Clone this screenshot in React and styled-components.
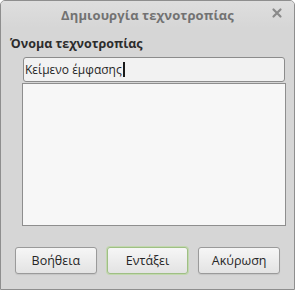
import React from "react";
import styled, { createGlobalStyle } from "styled-components";

const Global = createGlobalStyle`
  html, body { margin: 0; padding: 0; background: #ffffff; }
  body { font-family: "Open Sans", "Noto Sans", "DejaVu Sans", sans-serif; }
  * { box-sizing: border-box; }
`;

const Window = styled.div`
  width: 295px;
  height: 290px;
  background: #d6d6d6;
  border: 1px solid #8e8e8e;
  border-radius: 5px 5px 0 0;
  display: flex;
  flex-direction: column;
  overflow: hidden;
`;

const TitleBar = styled.div`
  height: 27px;
  position: relative;
  display: flex;
  align-items: center;
  justify-content: center;
  background: linear-gradient(#dedede, #d6d6d6);
`;

const Title = styled.div`
  font-size: 13px;
  font-weight: 700;
  color: #727272;
  letter-spacing: 0.1px;
`;

const Close = styled.div`
  position: absolute;
  right: 11px;
  top: 6px;
  width: 12px;
  height: 12px;
  display: flex;
`;

const Body = styled.div`
  flex: 1;
  display: flex;
  flex-direction: column;
  padding: 7px 9px 15px 9px;
`;

const Label = styled.div`
  font-size: 12.5px;
  font-weight: 700;
  color: #2c2c2c;
  line-height: 17px;
  margin-bottom: 5px;
`;

const Fields = styled.div`
  display: flex;
  flex-direction: column;
  padding: 0 0 0 12px;
  margin-right: -1px;
`;

const Input = styled.div`
  height: 25px;
  margin: 0 1px 1px 1px;
  background: #f2f2f2;
  border: 1px solid #8c8c8c;
  border-radius: 3px;
  display: flex;
  align-items: center;
  padding-left: 1px;
  font-size: 12px;
  color: #262626;
`;

const Caret = styled.span`
  display: inline-block;
  width: 2px;
  height: 15px;
  background: #1a1a1a;
  margin-left: 1px;
`;

const TextArea = styled.div`
  height: 143px;
  background: #f7f7f7;
  border: 1px solid #8e8e8e;
`;

const Buttons = styled.div`
  margin-top: auto;
  display: flex;
  justify-content: flex-end;
  gap: 10px;
  padding-right: 5px;
  padding-left: 5px;
`;

const Button = styled.div`
  width: 82px;
  height: 27px;
  display: flex;
  align-items: center;
  justify-content: center;
  font-size: 12.5px;
  color: #262626;
  border-radius: 3px;
  border: 1px solid ${(p) => (p.$default ? "#9fbf85" : "#9a9a9a")};
  box-shadow: ${(p) =>
    p.$default ? "0 0 0 1px #c2d8ae" : "0 1px 1px rgba(0,0,0,0.08)"};
  background: linear-gradient(#f6f6f6, #e3e3e3);
`;

export default function App() {
  return (
    <>
      <Global />
      <Window>
        <TitleBar>
          <Title>Δημιουργία τεχνοτροπίας</Title>
          <Close>
            <svg width="12" height="12" viewBox="0 0 12 12">
              <path d="M2.5 2.5 L9.5 9.5 M9.5 2.5 L2.5 9.5" stroke="#8a8a8a" strokeWidth="2.2" strokeLinecap="round" />
            </svg>
          </Close>
        </TitleBar>
        <Body>
          <Label>Όνομα τεχνοτροπίας</Label>
          <Fields>
            <Input>
              Κείμενο έμφασης<Caret />
            </Input>
            <TextArea />
          </Fields>
          <Buttons>
            <Button>Βοήθεια</Button>
            <Button $default>Εντάξει</Button>
            <Button>Ακύρωση</Button>
          </Buttons>
        </Body>
      </Window>
    </>
  );
}
